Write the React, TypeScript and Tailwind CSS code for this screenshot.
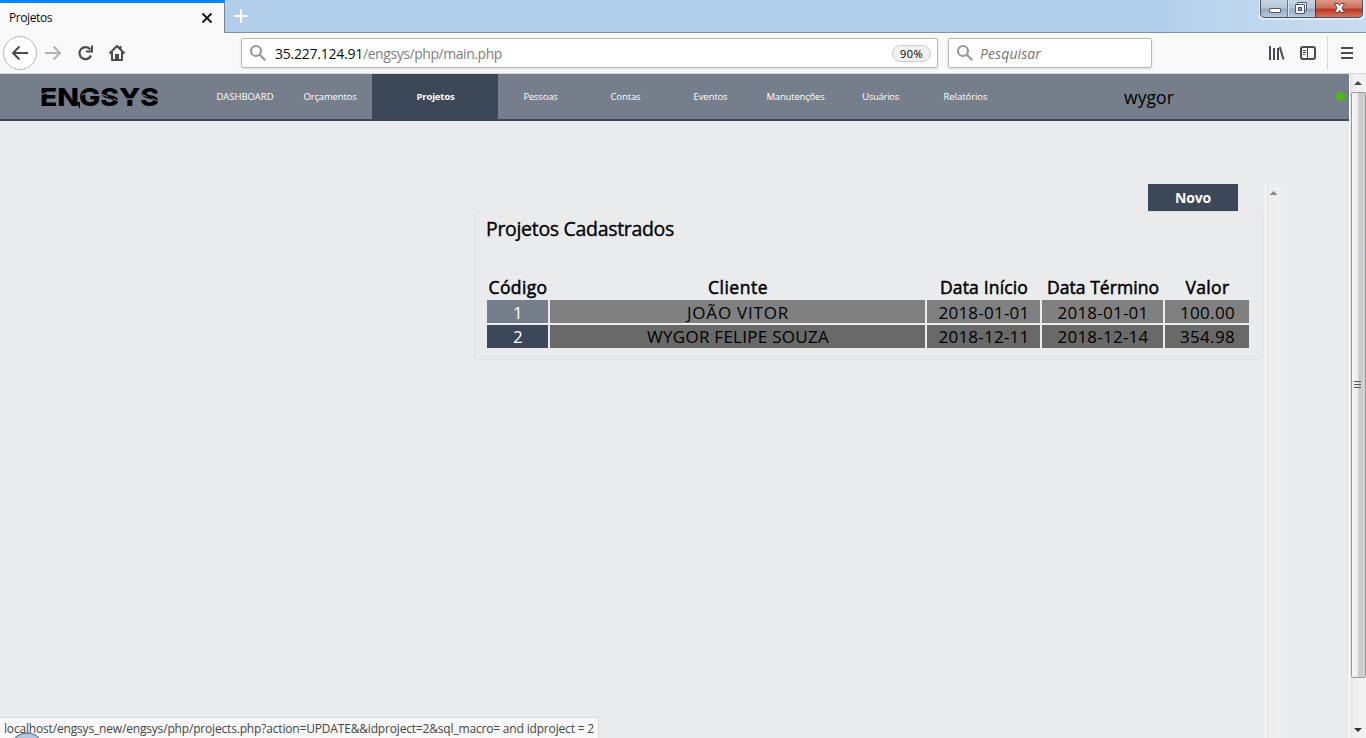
import { useLayoutEffect, useRef, useState } from "react";

type LabelProps = { children: string; width: number; className?: string };

/* Single-line label whose tracking is adjusted so that it fills a given width. */
function Label({ children, width, className = "" }: LabelProps) {
  const ref = useRef<HTMLSpanElement>(null);
  const [spacing, setSpacing] = useState(0);
  useLayoutEffect(() => {
    if (ref.current) {
      const natural = ref.current.getBoundingClientRect().width;
      setSpacing((width - natural) / children.length);
    }
  }, []);
  return (
    <span ref={ref} className={`inline-block whitespace-pre ${className}`} style={{ letterSpacing: `${spacing}px` }}>
      {children}
    </span>
  );
}

const navBefore = [
  { text: "DASHBOARD", width: 57 },
  { text: "Orçamentos", width: 53 },
];
const navAfter = [
  { text: "Pessoas", width: 34 },
  { text: "Contas", width: 30 },
  { text: "Eventos", width: 34 },
  { text: "Manutenções", width: 58 },
  { text: "Usuários", width: 37 },
  { text: "Relatórios", width: 44 },
];
const headers = [
  { text: "Código", width: 59 },
  { text: "Cliente", width: 60 },
  { text: "Data Início", width: 88 },
  { text: "Data Término", width: 112 },
  { text: "Valor", width: 44 },
];
const rows = [
  {
    code: "bg-[#777e8b] pt-[2px]",
    cell: "bg-[#808080] pt-[2px]",
    values: [
      { text: "1", width: 10 },
      { text: "JOÃO VITOR", width: 102 },
      { text: "2018-01-01", width: 91 },
      { text: "2018-01-01", width: 91 },
      { text: "100.00", width: 55 },
    ],
  },
  {
    code: "bg-[#3c4858]",
    cell: "bg-[#696969]",
    values: [
      { text: "2", width: 10 },
      { text: "WYGOR FELIPE SOUZA", width: 182 },
      { text: "2018-12-11", width: 91 },
      { text: "2018-12-14", width: 91 },
      { text: "354.98", width: 55 },
    ],
  },
];

function SearchGlyph() {
  return (
    <svg className="h-[18px] w-[18px] shrink-0" viewBox="0 0 18 18" fill="none" stroke="#999" strokeWidth="2.2">
      <circle cx="7" cy="7" r="5" />
      <path d="M10.7 10.7L16.3 16.2" />
    </svg>
  );
}

function WindowButtons() {
  return (
    <svg className="mr-px h-[20px] w-[106px]" viewBox="0 0 106 20">
      <defs>
        <linearGradient id="glass" x1="0" y1="0" x2="0" y2="1">
          <stop offset="0" stopColor="#c7d4e2" />
          <stop offset=".45" stopColor="#b5c5d7" />
          <stop offset=".5" stopColor="#94a9c1" />
          <stop offset="1" stopColor="#b9cbe0" />
        </linearGradient>
        <linearGradient id="close" x1="0" y1="0" x2="0" y2="1">
          <stop offset="0" stopColor="#dc9a8c" />
          <stop offset=".45" stopColor="#cf6b56" />
          <stop offset=".5" stopColor="#b93420" />
          <stop offset="1" stopColor="#dc7c5c" />
        </linearGradient>
      </defs>
      <path d="M1 0V14Q1 18 5 18H57V0Z" fill="url(#glass)" />
      <path d="M56 0V18H100Q104 18 104 14V0Z" fill="url(#close)" />
      <path d="M.5 0V14Q.5 18.5 5 18.5H100Q104.500 18.500 104.500 14V0" fill="none" stroke="#e5eff8" strokeWidth="2.500" />
      <path d="M1.500 0V13Q1.500 17.500 6 17.500H99Q103.500 17.500 103.500 13V0" fill="none" stroke="#45546a" />
      <path d="M28.500 0V17" stroke="#65758a" />
      <path d="M29.500 0V17" stroke="#d9e3ee" />
      <path d="M56.500 0V17" stroke="#5b3038" />
      <rect x="10.500" y="8.500" width="11" height="4" rx=".5" fill="#fff" stroke="#4f5666" />
      <path d="M38.500 2.500H47.500V10.500H38.500Z" fill="#f5f5f5" stroke="#4f5666" />
      <path d="M36.500 4.500H45.500V13.500H36.500Z" fill="#f5f5f5" stroke="#4f5666" />
      <rect x="39.500" y="7.500" width="3" height="3" fill="#8ea5bf" stroke="#4f5666" />
      <path d="M75.500 3.500H79L80.500 5.500L82 3.500H85.500L83 8L85.500 12.500H82L80.500 10.500L79 12.500H75.500L78 8Z" fill="#f6f6f6" stroke="#5c444b" />
    </svg>
  );
}

function Chrome() {
  return (
    <header className="h-[74px] shrink-0">
      <div className="flex h-[33px] bg-[linear-gradient(90deg,#b1cfeb_0%,#b1cfeb_84%,#bdd6ee_91%,#c9dcf0_100%)]">
        <div className="flex w-[225px] items-center justify-between border-t-[3px] border-r border-t-[#0a84ff] border-r-[#78899c] bg-[#f9f9f9] pr-[11px] pl-[9px] text-xs text-[#0c0c0d]">
          <Label width={43}>Projetos</Label>
          <svg className="h-[12px] w-[12px]" viewBox="0 0 12 12" stroke="#111" strokeWidth="1.800">
            <path d="M1.500 1.500L10.500 10.500M10.500 1.500L1.500 10.500" />
          </svg>
        </div>
        <div className="flex flex-1 justify-between border-b border-[#7893ad]">
          <svg className="mt-[9px] ml-[9px] h-[15px] w-[15px]" viewBox="0 0 15 15" stroke="#fff" strokeWidth="2">
            <path d="M7 .5V14M0 7H14" />
          </svg>
          <WindowButtons />
        </div>
      </div>
      <div className="flex h-[41px] items-start border-b border-[#d7d7db] bg-[#f9f9f9]">
        <svg className="h-[40px] w-[241px] shrink-0" viewBox="0 33 241 40" fill="none" stroke="#4a4a4f" strokeWidth="2">
          <circle cx="20" cy="53" r="16.500" fill="#fff" stroke="#b5b5b5" strokeWidth="1" />
          <path d="M13 53H28M19.500 46.500L13 53L19.500 59.500" />
          <path d="M45 53H60M53.500 46.500L60 53L53.500 59.500" stroke="#b4b4b6" />
          <path d="M90.300 49.500A6 6 0 1 0 91 55.500" strokeWidth="2.200" />
          <path d="M92 45.500V51.500H86" />
          <path d="M109.500 53.500L117 46L124.500 53.500M112 52V60H122V52" strokeLinejoin="round" />
          <path d="M115 54h4v6h-4z" fill="#4a4a4f" stroke="none" />
          <path d="M120.500 46v3" />
        </svg>
        <div className="mt-[5px] flex h-[30px] w-[697px] items-center rounded-[2px] border border-[#b9b9b9] bg-white pr-[6px] pl-[7px] text-sm shadow-sm">
          <SearchGlyph />
          <Label width={88} className="mt-[2px] ml-[8px] text-[#0c0c0d]">35.227.124.91</Label>
          <Label width={139} className="mt-[2px] text-[#808080]">/engsys/php/main.php</Label>
          <span className="ml-auto flex h-[17px] w-[39px] items-center justify-center rounded-full border border-[#ccc] bg-[#f0f0f0] text-[11px] text-black">
            <Label width={23} className="mt-px">90%</Label>
          </span>
        </div>
        <div className="mt-[5px] ml-[10px] flex h-[30px] w-[204px] items-center rounded-[2px] border border-[#b9b9b9] bg-white pl-[7px] text-sm text-[#757575] italic shadow-sm">
          <SearchGlyph />
          <Label width={61} className="mt-[2px] ml-[6px]">Pesquisar</Label>
        </div>
        <svg className="ml-auto h-[40px] w-[106px] shrink-0" viewBox="1260 33 106 40" fill="none" stroke="#4a4a4f" strokeWidth="2">
          <path d="M1270 46V60M1274 48V60M1278 48V60M1279.800 47L1283.500 59.500" />
          <rect x="1301" y="47" width="14" height="12" rx="2" />
          <path d="M1307.500 48V59" strokeWidth="1" />
          <path d="M1303 50.500H1306M1303 52.500H1306M1303 54.500H1305" strokeWidth="1" />
          <path d="M1327.500 36V70" stroke="#d7d7db" strokeWidth="1" />
          <path d="M1341 48H1353M1341 53H1353M1341 58H1353" />
        </svg>
      </div>
    </header>
  );
}

function Logo() {
  return (
    <svg className="h-[45px] w-[202px] shrink-0" viewBox="0 0 202 45">
      <text x="40" y="32" textLength="119" lengthAdjust="spacingAndGlyphs" fontSize="25" fontWeight="800" className="font-[Inter,sans-serif]">
        ENGSYS
      </text>
      {/* stencil slits through the stems */}
      <path d="M40 21L47 18.500M82 21L88 18.500M101 20L108 22.500M113 25L121 27.500M123 25L137 25M140 20L147 22.500M152 25L160 27.500" stroke="#777e8b" strokeWidth="1.300" />
      <path d="M76 28L80 35V28Z" fill="#000" />
    </svg>
  );
}

function NavBar() {
  return (
    <nav className="flex h-[47px] items-stretch border-b-2 border-[#3c4858] bg-[#777e8b] text-[9.500px] text-white">
      <Logo />
      {navBefore.map((n) => (
        <div key={n.text} className="flex w-[85px] items-center justify-center pt-px pl-px">
          <Label width={n.width}>{n.text}</Label>
        </div>
      ))}
      <div className="flex w-[126px] items-center justify-center bg-[#3c4858] pt-px pl-px font-bold">
        <Label width={38}>Projetos</Label>
      </div>
      {navAfter.map((n) => (
        <div key={n.text} className="flex w-[85px] items-center justify-center pt-px">
          <Label width={n.width}>{n.text}</Label>
        </div>
      ))}
      <div className="ml-[116px] flex items-center pt-px text-[17.500px] text-black">
        <Label width={50}>wygor</Label>
      </div>
      <div className="mt-[18px] mr-[4px] ml-auto h-[9px] w-[9px] rounded-full bg-[#4cbb17]" />
    </nav>
  );
}

function ProjectsPanel() {
  return (
    <div className="w-[789px]">
      <div className="flex justify-end pr-[25px]">
        <button className="flex h-[27px] w-[90px] items-center justify-center bg-[#3c4858] text-sm font-bold text-white">
          <Label width={36}>Novo</Label>
        </button>
      </div>
      <section className="h-[149px] border border-[#e1e2e4] pt-[3px] pl-[12px] text-black">
        <h1 className="-ml-px h-[27px] text-[19.500px] leading-[27px] [-webkit-text-stroke:0.35px_#000]">
          <Label width={188}>Projetos Cadastrados</Label>
        </h1>
        <div className="mt-[34px] grid w-[762px] grid-cols-[61px_375px_113px_121px_84px] gap-x-[2px]">
          {headers.map((h) => (
            <div key={h.text} className="flex h-[22px] items-center justify-center pl-px text-[17.500px] [-webkit-text-stroke:0.500px_#000]">
              <Label width={h.width}>{h.text}</Label>
            </div>
          ))}
        </div>
        <div className="mt-[2px] grid w-[762px] grid-cols-[61px_375px_113px_121px_84px] gap-[2px]">
          {rows.map((row) =>
            row.values.map((v, i) => (
              <div
                key={`${v.text}-${i}`}
                className={`flex h-[23px] items-center justify-center pl-px text-[17px] ${i === 0 ? `${row.code} text-white` : row.cell}`}
              >
                <Label width={v.width}>{v.text}</Label>
              </div>
            )),
          )}
        </div>
      </section>
    </div>
  );
}

function PageScrollbar() {
  return (
    <div className="flex w-[17px] shrink-0 flex-col items-center border-l border-white bg-[linear-gradient(90deg,#e3e3e3,#f0f0f0_25%,#f3f3f3)]">
      <svg className="h-[18px] w-[16px]" viewBox="0 0 16 18">
        <path d="M4 11L8 7L12 11Z" fill="#444" />
      </svg>
      <div className="flex h-[586px] w-[15px] items-center justify-center rounded-[2px] border border-[#999] bg-[linear-gradient(90deg,#f8f8f8,#e9e9e9_45%,#c8c8cb_55%,#d5d5d9)]">
        <svg className="mr-[2px] h-[9px] w-[7px]" viewBox="0 0 7 9" stroke="#555">
          <path d="M0 .5H7M0 3.500H7M0 6.500H7" />
        </svg>
      </div>
      <svg className="mt-auto h-[17px] w-[16px]" viewBox="0 0 16 17">
        <path d="M4 7H12L8 11Z" fill="#333" />
      </svg>
    </div>
  );
}

export default function App() {
  return (
    <div className="relative flex h-[738px] w-[1366px] flex-col overflow-hidden bg-[#eaebed] font-['Open_Sans','Noto_Sans',sans-serif]">
      <Chrome />
      <div className="flex min-h-0 flex-1">
        <main className="flex min-w-0 flex-1 flex-col">
          <NavBar />
          <div className="flex flex-1 pt-[63px] pl-[474px]">
            <ProjectsPanel />
            <div className="ml-[2px] w-[16px] border-l border-white bg-[linear-gradient(90deg,#e7e7e9,#eee_20%,#f0f0f0)] pt-[6px]">
              <svg className="mx-auto h-[6px] w-[9px]" viewBox="0 0 9 6">
                <path d="M.5 5L4.500 1L8.500 5Z" fill="#888" />
              </svg>
            </div>
          </div>
        </main>
        <PageScrollbar />
      </div>
      <div className="absolute bottom-0 left-0 flex h-[21px] w-[599px] items-center overflow-hidden rounded-tr-[2px] border-t border-r border-[#dcdcdc] bg-[#f9f9f9] pt-px pl-[4px] text-xs text-[#444]">
        <Label width={590}>{"localhost/engsys_new/engsys/php/projects.php?action=UPDATE&&idproject=2&sql_macro= and idproject = 2"}</Label>
        <svg className="absolute bottom-0 left-[12px] h-[6px] w-[30px]" viewBox="0 0 30 6">
          <circle cx="15" cy="18.500" r="17.500" fill="#b3c6da" stroke="#3c6288" />
        </svg>
      </div>
    </div>
  );
}
